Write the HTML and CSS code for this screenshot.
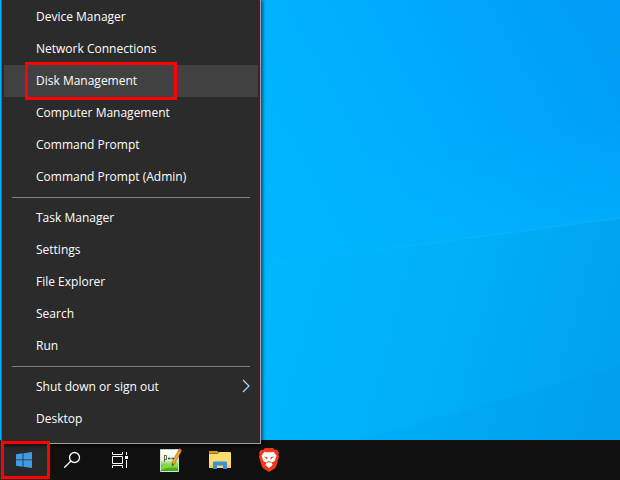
FILE: index.html
```html
<!DOCTYPE html>
<html lang="en">
  <head>
    <meta charset="UTF-8" />
    <meta name="viewport" content="width=device-width, initial-scale=1.0" />
    <title>Desktop</title>
    <link rel="stylesheet" href="styles.css">
  </head>
  <body>
    <main class="desktop">
      <svg class="wallpaper" viewBox="0 0 620 440" preserveAspectRatio="none" aria-hidden="true">
        <defs>
          <linearGradient id="sky" gradientUnits="userSpaceOnUse" x1="260" y1="260" x2="640" y2="60">
            <stop offset="0" stop-color="#00b9ff" />
            <stop offset="0.5" stop-color="#00acfd" />
            <stop offset="1" stop-color="#009cf5" />
          </linearGradient>
          <linearGradient id="beam" gradientUnits="userSpaceOnUse" x1="260" y1="300" x2="630" y2="400">
            <stop offset="0" stop-color="#00b7fe" />
            <stop offset="0.5" stop-color="#00aff8" />
            <stop offset="1" stop-color="#00a0ee" />
          </linearGradient>
          <linearGradient id="glow" gradientUnits="userSpaceOnUse" x1="430" y1="140" x2="441" y2="242">
            <stop offset="0" stop-color="#00b4ff" stop-opacity="0" />
            <stop offset="1" stop-color="#00b4ff" stop-opacity="0.5" />
          </linearGradient>
        </defs>
        <rect width="620" height="440" fill="url(#sky)" />
        <path d="M262 160L620 110V218L262 266Z" fill="url(#glow)" />
        <path d="M0 301L262 266L620 218V440H0Z" fill="url(#beam)" />
        <path d="M262 265L620 217V219L262 266Z" fill="#18b4ff" opacity="0.4" />
        <path d="M380 434L620 366V440H360Z" fill="#0095e8" opacity="0.15" />
      </svg>

      <nav class="menu">
        <a class="item" href="#">Device Manager</a>
        <a class="item" href="#">Network Connections</a>
        <a class="item active" href="#">Disk Management<span class="mark mark-item"></span></a>
        <a class="item" href="#">Computer Management</a>
        <a class="item" href="#">Command Prompt</a>
        <a class="item" href="#">Command Prompt (Admin)</a>
        <hr />
        <a class="item" href="#">Task Manager</a>
        <a class="item" href="#">Settings</a>
        <a class="item" href="#">File Explorer</a>
        <a class="item" href="#">Search</a>
        <a class="item" href="#">Run</a>
        <hr />
        <a class="item" href="#">Shut down or sign out
          <svg class="arrow" width="8" height="14" viewBox="0 0 8 14" aria-hidden="true">
            <path d="M1 1L7 7L1 13" fill="none" stroke="#a9dcf0" stroke-width="1.2" />
          </svg>
        </a>
        <a class="item" href="#">Desktop</a>
      </nav>
    </main>

    <footer class="taskbar">
      <button class="task start" aria-label="Start">
        <svg width="16" height="16" viewBox="0 0 16 16" fill="#429ce3">
          <path d="M0 2.2L6.6 1.3V7.5H0ZM7.4 1.2L16 0V7.5H7.4ZM0 8.3H6.6V14.7L0 13.8ZM7.4 8.3H16V16L7.4 14.8Z" />
        </svg>
        <span class="mark mark-start"></span>
      </button>
      <button class="task" aria-label="Search">
        <svg width="18" height="18" viewBox="0 0 18 18" fill="none" stroke="#fff" stroke-width="1.3">
          <circle cx="11.5" cy="6.5" r="5" />
          <path d="M8 10L1.2 16.8" />
        </svg>
      </button>
      <button class="task" aria-label="Task View">
        <svg width="18" height="16" viewBox="0 0 18 16" fill="none" stroke="#fff">
          <path d="M1.5 0V2.5H11.5V0M1.5 4.5H11.5V11.5H1.5ZM1.5 16V13.5H11.5V16M15.5 0V3M15.5 8V16" />
          <path d="M14 4H17V7H14Z" fill="#fff" stroke="none" />
        </svg>
      </button>
      <div class="apps">
        <button class="task" aria-label="Notepad++">
          <svg width="24" height="26" viewBox="0 0 24 26">
            <defs>
              <linearGradient id="page" x1="0" y1="0" x2="0" y2="1">
                <stop offset="0.2" stop-color="#fbfdf9" />
                <stop offset="0.5" stop-color="#d8efc2" />
                <stop offset="0.75" stop-color="#62c322" />
                <stop offset="1" stop-color="#39a313" />
              </linearGradient>
            </defs>
            <path d="M2.5 2.5H20.5V24.5H2.5Z" fill="url(#page)" stroke="#d9ded7" />
            <path d="M3 20Q10 15 20 16V21Q12 19 3 23Z" fill="#9be45b" opacity="0.6" />
            <path d="M4 2V3M7 2V3M10 2V3M13 2V3M16 2V3" stroke="#999" />
            <path d="M6.5 8V15M7 8.5H8.5V12.5H7" fill="none" stroke="#666" />
            <path d="M10 11.5H12.4M13.6 11.5H16" stroke="#444" stroke-width="1.4" />
            <path d="M21 2L23.5 3.8L16.5 17L14 19L14.2 15.5Z" fill="#efad27" stroke="#8f651c" stroke-width="0.6" />
            <path d="M20.3 3.2L21.3 1.3L23.9 3L22.8 5Z" fill="#c76f63" />
            <path d="M14.2 16L14 19L16.3 17.2Z" fill="#5c482b" />
          </svg>
        </button>
        <button class="task" aria-label="File Explorer">
          <svg width="22" height="18" viewBox="0 0 22 18">
            <path d="M0 0H8.5L10 2H0Z" fill="#d99a0c" />
            <path d="M0 2.5H9L10.5 1H21Q22 1 22 2V17H0Z" fill="#ffdb70" />
            <path d="M0 14H22V17H0Z" fill="#f7cc58" />
            <path d="M4 18V11.5Q4 10.5 5 10.5H17Q18 10.5 18 11.5V18H14V14.5H8V18Z" fill="#3c91d5" />
            <path d="M8 15H14V17H8Z" fill="#ffdc78" />
          </svg>
        </button>
        <button class="task" aria-label="Brave">
          <svg width="22" height="24" viewBox="0 0 22 24">
            <path d="M6 0H14L16 2L18 1.8L20 4.6L19.3 6.5L20 8.5L17.3 18.2L15.7 20.5L10 24L4.3 20.5L2.7 18.2L0 8.5L0.7 6.5L0 4.6L2 1.8L4 2Z" fill="#f4391a" />
            <path d="M5.5 3.8L8 4.3H12L14.5 3.8L17.5 7.8L15.6 13L12.6 14.8L13.6 17L10 20L6.4 17L7.4 14.8L4.4 13L2.5 7.8Z" fill="#fff" />
            <path d="M5 8.4L8.5 9.2L8.2 11.4ZM15 8.4L11.5 9.2L11.8 11.4Z" fill="#f4391a" />
            <path d="M7.6 14.6L10 13.6L12.4 14.6" fill="none" stroke="#f4391a" />
          </svg>
        </button>
      </div>
    </footer>
  </body>
</html>
```

FILE: styles.css
```css
* {
  box-sizing: border-box;
}

body {
  margin: 0;
  height: 100vh;
  display: flex;
  flex-direction: column;
  overflow: hidden;
  background-color: #101010;
  font-family: "Open Sans", "Noto Sans", sans-serif;
  font-size: 12px;
}

.desktop {
  flex: 1;
  position: relative;
  min-height: 0;
}

.wallpaper {
  display: block;
  width: 100%;
  height: 100%;
}

/* the menu hangs a little over the taskbar */
.menu {
  position: absolute;
  left: 1px;
  bottom: -4px;
  z-index: 2;
  width: 260px;
  padding: 2px 2px 8px;
  background-color: #2b2b2b;
  border: 1px solid #a0a0a0;
  border-left-color: #606060;
  box-shadow: 2px 2px 3px rgba(0, 0, 0, 0.5);
}

.item {
  position: relative;
  display: flex;
  align-items: center;
  justify-content: space-between;
  height: 32px;
  padding: 0 8px 2px 32px;
  color: #fff;
  text-decoration: none;
}

.item:hover,
.item.active {
  background-color: #414141;
}

.menu hr {
  height: 1px;
  margin: 4px 8px;
  border: none;
  background-color: #808080;
}

.mark {
  position: absolute;
  border: 3px solid #ff0000;
  pointer-events: none;
}

.mark-item {
  top: -3px;
  bottom: -3px;
  left: 21px;
  width: 152px;
}

.mark-start {
  top: 1px;
  bottom: 1px;
  left: 1px;
  right: -2px;
}

.taskbar {
  display: flex;
  height: 40px;
  background-color: #101010;
}

.task {
  position: relative;
  display: flex;
  align-items: center;
  justify-content: center;
  width: 48px;
  height: 40px;
  padding: 0;
  border: none;
  background: none;
}

.task.start {
  background-color: #282828;
}

.start .mark {
  z-index: 3;
}

.apps {
  display: flex;
  gap: 2px;
  margin-left: 2px;
}
```
